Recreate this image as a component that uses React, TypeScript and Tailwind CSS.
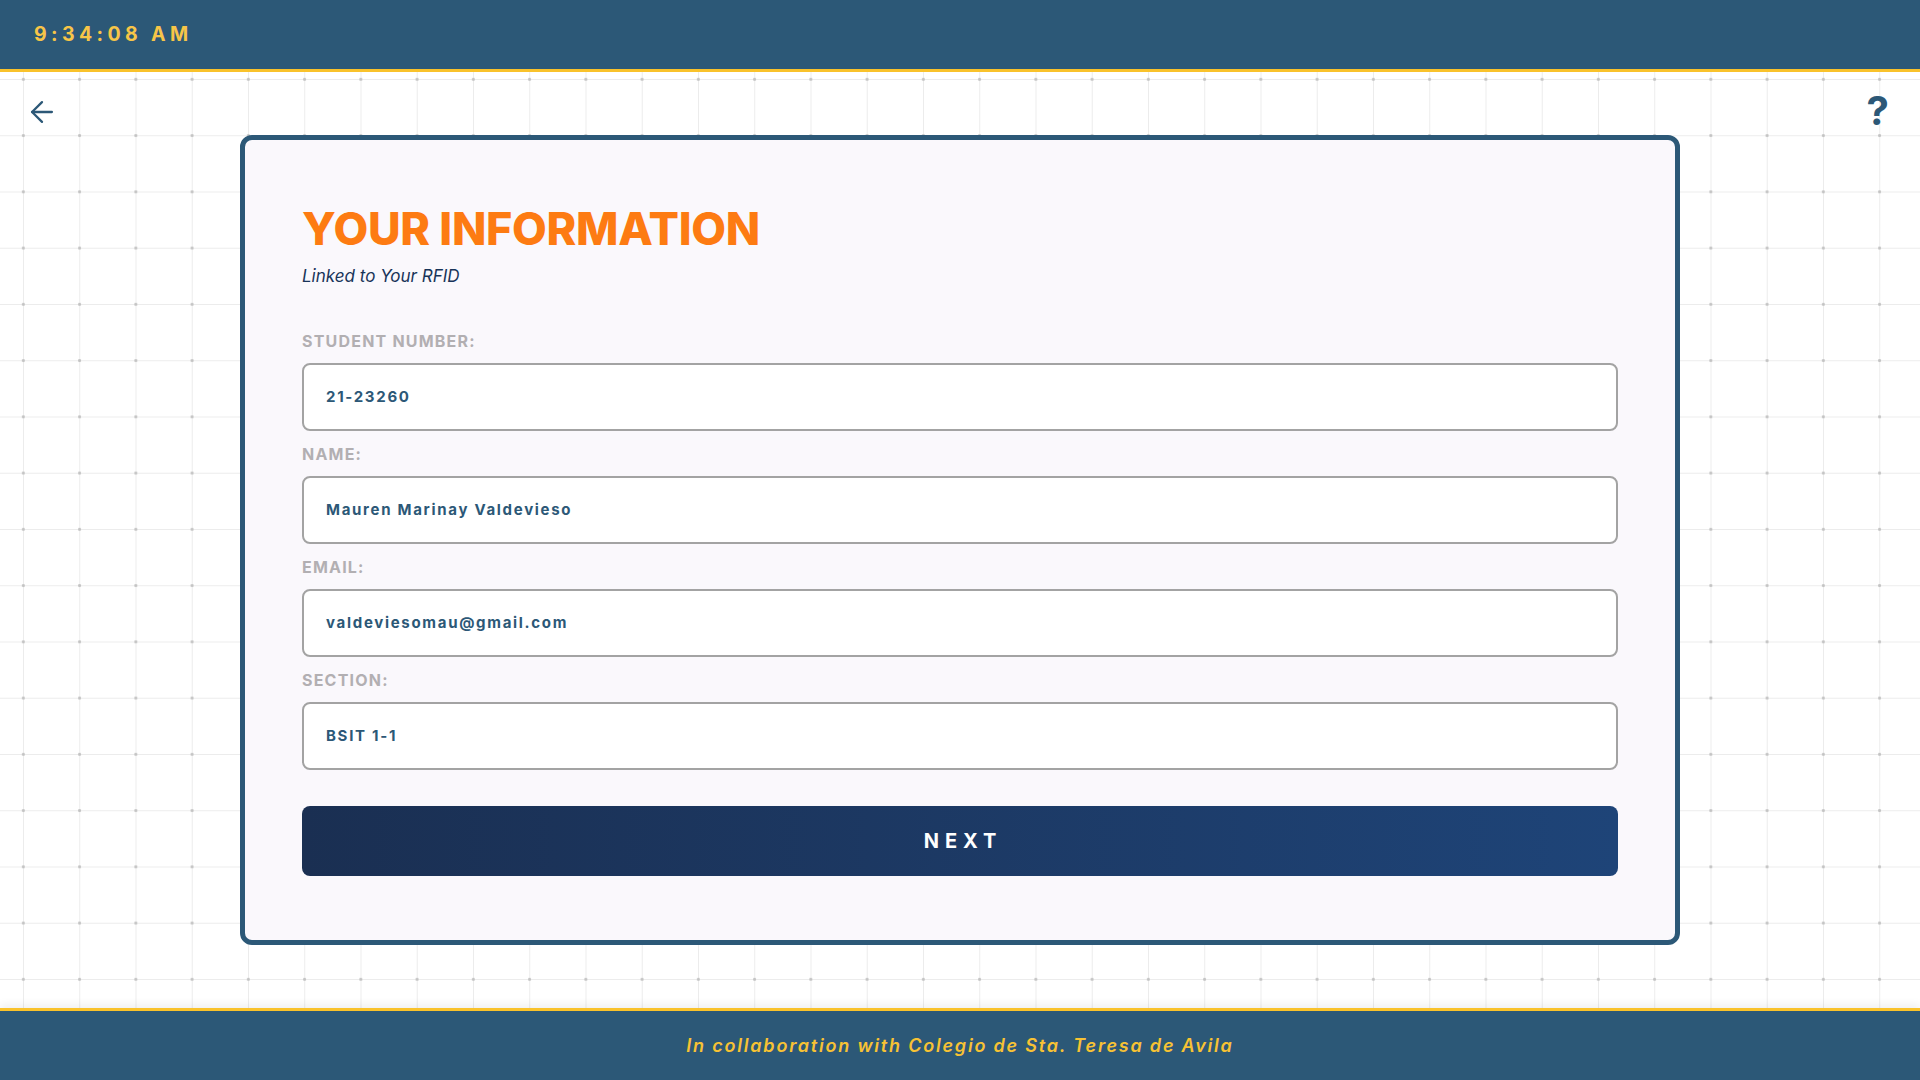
import { ArrowLeft } from 'lucide-react'

const fields = [
  { label: 'STUDENT NUMBER:', value: '21-23260' },
  { label: 'NAME:', value: 'Mauren Marinay Valdevieso' },
  { label: 'EMAIL:', value: 'valdeviesomau@gmail.com' },
  { label: 'SECTION:', value: 'BSIT 1-1' },
]

const gridBg =
  'bg-[radial-gradient(circle,#c4c4c4_1.3px,transparent_1.6px),linear-gradient(to_right,#ececec_1px,transparent_1px),linear-gradient(to_bottom,#ececec_1px,transparent_1px)] bg-[length:56.25px_56.25px] bg-[position:-4.8px_-20.8px,23px_7px,23px_7px]'

function InfoField({ label, value }: { label: string; value: string }) {
  return (
    <div className="mt-[13.5px] first:mt-0">
      <div className="text-[16px] leading-[20px] font-bold tracking-[1.2px] text-[#b2afb2]">
        {label}
      </div>
      <div className="mt-[11.5px] flex h-[68px] items-center rounded-[8px] border-2 border-[#a3a3a3] bg-white pl-[22px]">
        <span className="text-[15px] font-bold tracking-[1.7px] text-[#2c5877]">
          {value}
        </span>
      </div>
    </div>
  )
}

export default function App() {
  return (
    <div className="flex h-screen flex-col bg-white font-['Inter',sans-serif]">
      <header className="flex h-[72px] shrink-0 items-center border-b-[3px] border-[#f9c22b] bg-[#2c5877] pl-[34px]">
        <span className="text-[19.5px] font-bold tracking-[4.4px] text-[#f7c548]">
          9:34:08 AM
        </span>
      </header>

      <main className={`grid flex-1 grid-cols-[240px_1440px_240px] ${gridBg}`}>
        <div className="flex items-start pl-[25px] pt-[23px]">
          <button className="text-[#2c5877]">
            <ArrowLeft className="h-[34px] w-[34px]" strokeWidth={1.6} />
          </button>
        </div>

        <div className="flex items-center">
          <section className="w-full rounded-[12px] border-[5px] border-[#2c5877] bg-[#faf8fc] px-[57px] pt-[66px] pb-[64px]">
            <h1 className="text-[45px] leading-[45px] font-extrabold tracking-[-0.3px] text-[#fd7b12]">
              YOUR INFORMATION
            </h1>
            <p className="mt-[13px] text-[17px] leading-[24px] italic text-[#183459]">
              Linked to Your RFID
            </p>

            <div className="mt-[43px]">
              {fields.map((f) => (
                <InfoField key={f.label} label={f.label} value={f.value} />
              ))}
            </div>

            <button className="mt-[36px] flex h-[70px] w-full items-center justify-center rounded-[8px] bg-gradient-to-r from-[#1a2f52] to-[#1e4478] pl-[6px]">
              <span className="text-[20px] font-bold tracking-[6px] text-white">NEXT</span>
            </button>
          </section>
        </div>

        <div className="flex items-start justify-end pr-[31px] pt-[19px]">
          <button className="text-[40px] leading-[40px] font-bold text-[#2c5877]">?</button>
        </div>
      </main>

      <footer className="flex h-[72px] shrink-0 items-center justify-center border-t-[3px] border-[#f9c22b] bg-[#2c5877] shadow-[0_-4px_8px_rgba(0,0,0,0.06)]">
        <span className="text-[18px] font-semibold italic tracking-[1.8px] text-[#f7c234]">
          In collaboration with Colegio de Sta. Teresa de Avila
        </span>
      </footer>
    </div>
  )
}
